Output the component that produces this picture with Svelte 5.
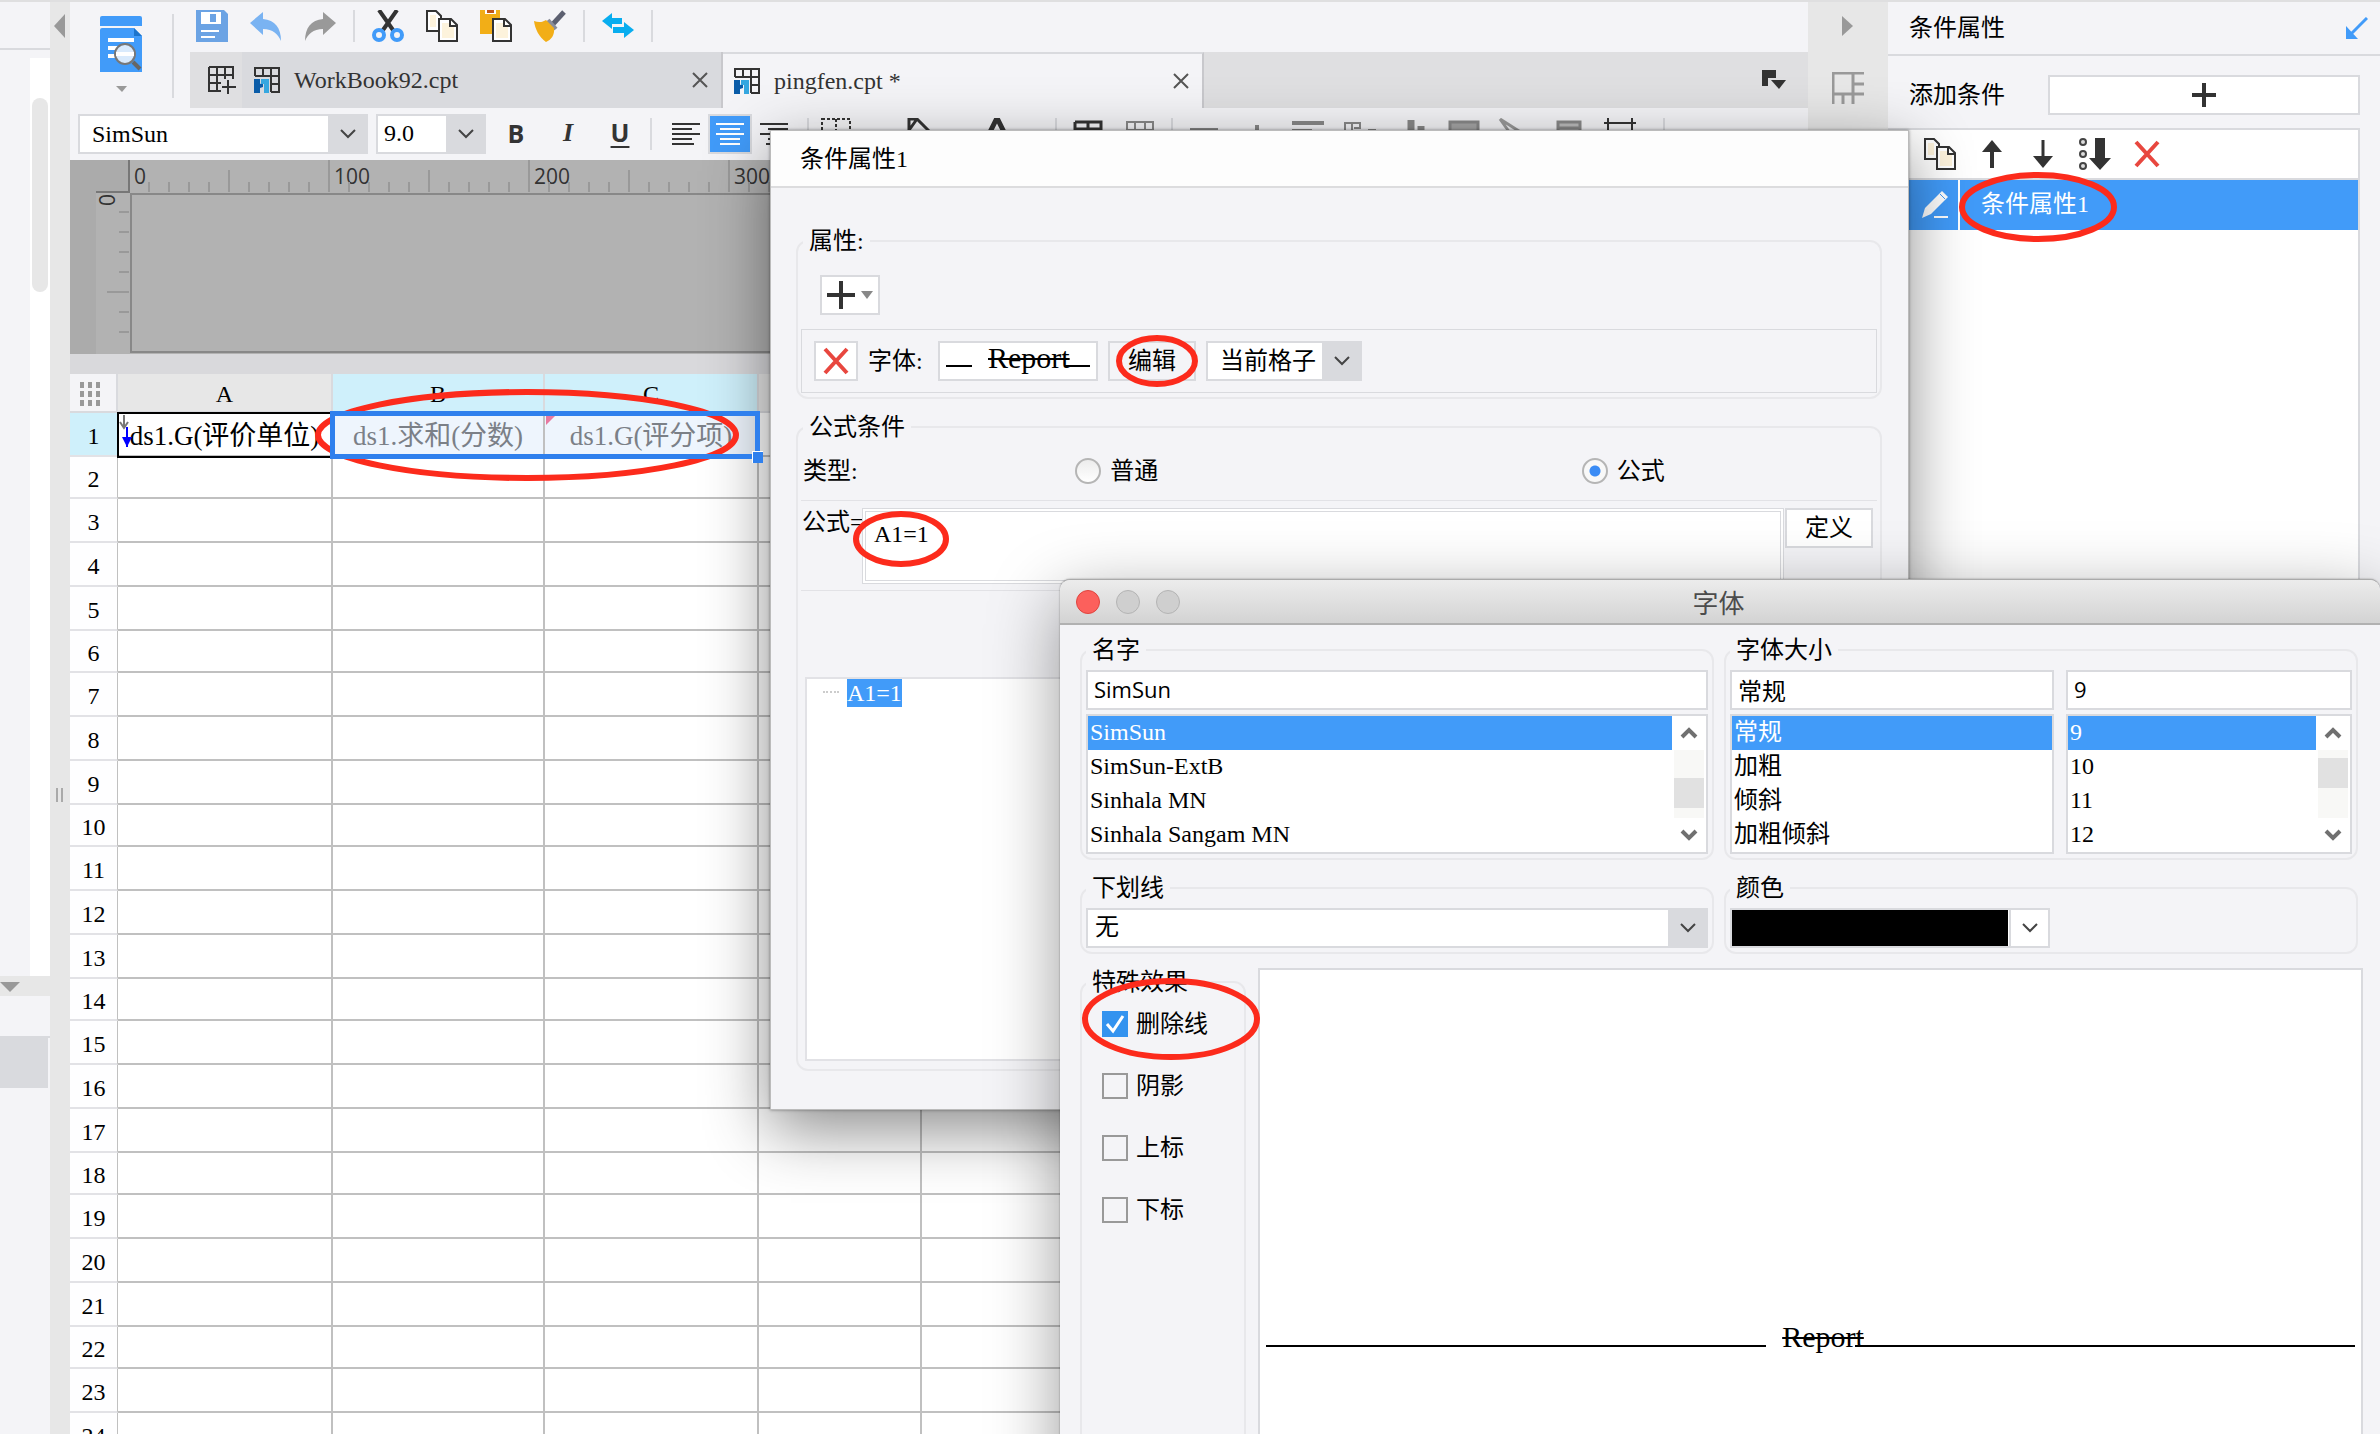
<script>
    let fontName = $state('SimSun');
    let fontSize = $state('9.0');
    let scope = $state('当前格子');
    let conditionType = $state('formula');
    let formula = $state('A1=1');
    let family = $state('SimSun');
    let style = $state('常规');
    let size = $state('9');
    let underline = $state('无');
    let effects = $state([
        { label: '删除线', on: true },
        { label: '阴影', on: false },
        { label: '上标', on: false },
        { label: '下标', on: false }
    ]);

    const families = ['SimSun', 'SimSun-ExtB', 'Sinhala MN', 'Sinhala Sangam MN'];
    const styles = ['常规', '加粗', '倾斜', '加粗倾斜'];
    const sizes = ['9', '10', '11', '12'];
    const rows = Array.from({ length: 24 }, (_, i) => i + 1);
    const hTicks = Array.from({ length: 84 }, (_, i) => i);
    const vTicks = [1, 2, 3, 4, 5, 6, 7];

    function tickTop(i) {
        if (i % 10 === 0) return 0;
        return i % 5 === 0 ? 10 : 22;
    }
</script>

{#snippet copyIcon()}
    <svg width="32" height="32" viewBox="0 0 32 32">
        <path d="M1 1h9l5 5v15H1z" fill="#fff" stroke="#333" stroke-width="2" />
        <path d="M4 5h6v12H4z" fill="#fdf3dc" />
        <path d="M13 9h12l6 6v16H13z" fill="#fff" stroke="#333" stroke-width="2" />
        <path d="M16 13h8v4h4v11H16z" fill="#fdf3dc" />
        <path d="M24 9v7h7" fill="none" stroke="#333" stroke-width="2" />
    </svg>
{/snippet}

{#snippet bookIcon()}
    <svg width="26" height="26" viewBox="0 0 26 26">
        <path d="M1 9V1h24v24h-8M9 1v9M17 1v24M1 9h24M17 17h8" fill="none" stroke="#333" stroke-width="2" />
        <path d="M0 12h6v5l3-1v4l-3 1v5H0z" fill="#0a5ca8" />
        <path d="M7 12h8v14h-5v-9H7z" fill="#35a7e0" />
    </svg>
{/snippet}

{#snippet chevron(up)}
    <svg width="18" height="12" viewBox="0 0 18 12">
        <path d={up ? 'M2 10 9 3l7 7' : 'M2 2l7 7 7-7'} fill="none" stroke="currentColor" stroke-width={up === undefined ? 2 : 4} />
    </svg>
{/snippet}

{#snippet cross()}
    <svg width="26" height="28" viewBox="0 0 26 28">
        <path d="M2 2l22 24M24 2 2 26" fill="none" stroke="#e8473f" stroke-width="4" />
    </svg>
{/snippet}

{#snippet listbox(label, items, selected, pick, thumb)}
    <div class="listbox">
        <ul role="listbox" aria-label={label}>
            {#each items as item}
                <li role="option" aria-selected={item === selected}>
                    <button class="option" class:selected={item === selected} onclick={() => pick(item)}>{item}</button>
                </li>
            {/each}
        </ul>
        {#if thumb !== undefined}
            <div class="scrollbar">
                <button aria-label="Up">{@render chevron(true)}</button>
                <div class="track"><div class="thumb" style="margin-top: {thumb}px"></div></div>
                <button aria-label="Down">{@render chevron(false)}</button>
            </div>
        {/if}
    </div>
{/snippet}

<div class="app">
    <aside class="left">
        <div class="left-head"></div>
        <div class="left-scroll"><div class="left-thumb"></div></div>
        <div class="left-split"><svg width="20" height="10"><path d="M0 0h20L10 10z" fill="#999" /></svg></div>
        <div class="left-tab"></div>
        <div class="left-box"></div>
    </aside>
    <div class="splitter">
        <svg class="fold" width="14" height="28"><path d="M12 2v24L1 14z" fill="#999" /></svg>
        <svg class="grip" width="8" height="14"><path d="M1 0v14M6 0v14" stroke="#aaa" stroke-width="2" /></svg>
    </div>

    <main>
        <div class="top">
            <button class="preview-btn" aria-label="Preview">
                <svg width="42" height="76" viewBox="0 0 42 76">
                    <path d="M0 2q0-2 2-2h38q2 0 2 2v8H0z" fill="#419bf9" />
                    <path d="M0 14q0-2 2-2h32l8 8v36H0z" fill="#419bf9" />
                    <path d="M0 10h42v2H0z" fill="#f4f4f7" />
                    <path d="M34 12l8 8h-8z" fill="#1c74cc" />
                    <path d="M8 24h26M8 32h12M8 40h10" stroke="#fff" stroke-width="4" />
                    <circle cx="25" cy="38" r="10" fill="#d9eafc" stroke="#777" stroke-width="2" />
                    <path d="M16 38h18" stroke="#fff" stroke-width="4" />
                    <path d="M33 46l7 7" stroke="#666" stroke-width="4" />
                    <path d="M16 70h11l-5 6z" fill="#999" />
                </svg>
            </button>
            <div class="vline tall"></div>
            <div class="top-right">
                <div class="tools">
                    <button aria-label="Save">
                        <svg width="32" height="32"><path d="M0 0h28l4 4v28H0z" fill="#6ba3e4" /><path d="M5 2h20v12H5z" fill="#fff" /><path d="M14 4h6v8h-6z" fill="#6ba3e4" /><path d="M5 21h18M5 27h14" stroke="#fff" stroke-width="2" /></svg>
                    </button>
                    <button aria-label="Undo">
                        <svg width="32" height="32"><path d="M0 13 13 2v7c12 1 18 9 18 22-3-7-8-12-18-12v6z" fill="#7ab3f2" /></svg>
                    </button>
                    <button aria-label="Redo">
                        <svg width="32" height="32"><path d="M32 13 19 2v7C7 10 1 18 1 31c3-7 8-12 18-12v6z" fill="#999" /></svg>
                    </button>
                    <div class="vline"></div>
                    <button aria-label="Cut">
                        <svg width="32" height="32"><path d="M7 0l14 20M25 0 11 20" stroke="#333" stroke-width="4" fill="none" /><circle cx="7" cy="25" r="5" fill="none" stroke="#419bf9" stroke-width="4" /><circle cx="25" cy="25" r="5" fill="none" stroke="#419bf9" stroke-width="4" /></svg>
                    </button>
                    <button aria-label="Copy">{@render copyIcon()}</button>
                    <button aria-label="Paste">
                        <svg width="32" height="32"><path d="M0 0h20v24H0z" fill="#f2ae17" /><path d="M5 0h11v4H5z" fill="#fff" /><path d="M7 0h7v3H7z" fill="#c0561a" /><path d="M13 9h12l6 6v16H13z" fill="#fff" stroke="#333" stroke-width="2" /><path d="M16 13h8v4h4v11H16z" fill="#fdf3dc" /><path d="M24 9v7h7" fill="none" stroke="#333" stroke-width="2" /></svg>
                    </button>
                    <button aria-label="Format painter">
                        <svg width="32" height="32"><path d="M30 2 19 14" stroke="#5c6070" stroke-width="5" /><path d="M14 10l8 9" stroke="#8a8d99" stroke-width="4" /><path d="M12 10c-3 2-7 3-12 1 1 8 5 16 12 21 5-2 9-7 8-14z" fill="#f2ae17" /></svg>
                    </button>
                    <div class="vline"></div>
                    <button aria-label="Swap">
                        <svg width="32" height="32"><path d="M0 11 10 3v5h10v6H10v5z" fill="#08adef" /><path d="M32 20 22 12v5H11v6h11v5z" fill="#08adef" /></svg>
                    </button>
                    <div class="vline"></div>
                </div>
                <div class="tabs">
                    <button class="new-tab" aria-label="New">
                        <svg width="28" height="28"><path d="M1 1h24v12M1 1v24h12M9 1v24M17 1v12M1 9h24M1 17h12M20 14v14M14 21h14" fill="none" stroke="#333" stroke-width="2" /></svg>
                    </button>
                    <div class="tab">
                        {@render bookIcon()}<span>WorkBook92.cpt</span>
                        <button aria-label="Close"><svg width="16" height="16"><path d="M1 1l14 14M15 1 1 15" stroke="#555" stroke-width="2" /></svg></button>
                    </div>
                    <div class="tab active">
                        {@render bookIcon()}<span>pingfen.cpt *</span>
                        <button aria-label="Close"><svg width="16" height="16"><path d="M1 1l14 14M15 1 1 15" stroke="#555" stroke-width="2" /></svg></button>
                    </div>
                    <button class="tab-menu" aria-label="Tabs"><svg width="24" height="20"><path d="M0 0h14v8H6v8H0z" fill="#333" /><path d="M9 10h15l-7 9z" fill="#333" /></svg></button>
                </div>
            </div>
        </div>

        <div class="format">
            <div class="combo font-combo">
                <select aria-label="Font" bind:value={fontName}><option>SimSun</option></select>
                <span class="arrow">{@render chevron()}</span>
            </div>
            <div class="combo size-combo">
                <select aria-label="Size" bind:value={fontSize}><option>9.0</option></select>
                <span class="arrow">{@render chevron()}</span>
            </div>
            <button class="bold">B</button>
            <button class="italic">I</button>
            <button class="under">U</button>
            <div class="vline"></div>
            <button class="align" aria-label="Left"><svg width="28" height="22"><path d="M0 1h28M0 6h20M0 11h28M0 16h20M0 21h22" stroke="#333" stroke-width="2" /></svg></button>
            <button class="align on" aria-label="Center"><svg width="28" height="22"><path d="M0 1h28M4 6h20M0 11h28M4 16h20M4 21h20" stroke="#fff" stroke-width="2" /></svg></button>
            <button class="align" aria-label="Right"><svg width="28" height="22"><path d="M0 1h28M8 6h20M0 11h28M8 16h20M6 21h22" stroke="#333" stroke-width="2" /></svg></button>
            <svg class="more" width="880" height="32">
                <g fill="none" stroke="#333" stroke-width="2">
                    <path d="M8 0v32M256 0v32M372 0v32M864 0v32" stroke="#d9dade" />
                    <path d="M22 1h28v30H22zM36 1v30" stroke-dasharray="3 2" />
                    <path d="M109 12V1h8l14 14M117 1l-10 14" stroke-width="3" />
                    <path d="M190 14l7-14 7 14" stroke-width="5" />
                    <path d="M276 13h24v19h-24z" fill="#35b5f2" stroke="none" />
                    <path d="M275 4h26v26M275 4v26M288 4v8M275 11h26" stroke-width="3" />
                    <path d="M327 4h26v26h-26zM335 4v26M345 4v26M327 12h26" stroke="#888" />
                    <path d="M390 12h28M457 7v12M492 5h32M492 13h20" stroke="#888" stroke-width="4" />
                    <path d="M545 14V5h16M552 5v9M560 5v5h-6M568 12h8" stroke="#888" stroke-width="2" />
                    <path d="M611 2v30M621 8v24" stroke="#888" stroke-width="7" />
                    <path d="M650 4h28v26h-28z" fill="#a5a5a5" stroke="#888" stroke-width="3" />
                    <path d="M700 1l22 14M700 1l10 14" stroke="#999" stroke-width="3" />
                    <path d="M758 4h22v26h-22zM758 10h22" fill="#bbb" stroke="#888" stroke-width="3" />
                    <path d="M804 5h32M808 0v32M832 0v32" />
                </g>
            </svg>
        </div>

        <div class="canvas">
            <svg width="100%" height="194">
                <rect width="100%" height="194" fill="#b2b2b2" />
                <rect width="58" height="32" fill="#ababab" />
                <rect width="26" height="194" fill="#ababab" />
                {#each hTicks as i}
                    <line x1={59 + i * 20} x2={59 + i * 20} y1={tickTop(i)} y2="32" />
                    {#if i % 10 === 0}<text x={64 + i * 20} y="24">{i * 10}</text>{/if}
                {/each}
                {#each vTicks as i}
                    <line x1={i === 5 ? 37 : 49} x2="59" y1={32 + i * 20} y2={32 + i * 20} />
                {/each}
                <text x="-46" y="45" transform="rotate(-90)">0</text>
                <path d="M26 32h34M59 0v33" stroke="#777" stroke-width="2" />
                <path d="M2000 34H61v158h1939" fill="none" stroke="#888" stroke-width="2" />
            </svg>
        </div>

        <div class="sheet">
            <table>
                <colgroup><col class="c0" /><col class="ca" /><col class="cb" /><col class="cc" /><col class="cd" /><col class="ce" /></colgroup>
                <thead>
                    <tr>
                        <th class="corner"><svg width="20" height="24"><path d="M2 0v24M10 0v24M18 0v24" stroke="#999" stroke-width="4" stroke-dasharray="6 3" /></svg></th>
                        <th>A</th><th class="hot">B</th><th class="hot">C</th><th></th><th></th>
                    </tr>
                </thead>
                <tbody>
                    {#each rows as n}
                        <tr class:short={n % 4 === 2}>
                            <th class:hot={n === 1}>{n}</th>
                            {#if n === 1}
                                <td class="a1">ds1.G(评价单位)<svg class="mark" width="16" height="36"><path d="M5 0v12M1 7l4 6 4-6" fill="none" stroke="#777" stroke-width="2" /><path d="M8 12v20" stroke="#00f" stroke-width="2" /><path d="M3 22h10L8 32z" fill="#00f" /></svg></td>
                                <td class="picked first">ds1.求和(分数)<span class="selection"></span><span class="handle"></span></td>
                                <td class="picked">ds1.G(评分项)<svg class="mark" width="12" height="12"><path d="M0 0h10L0 10z" fill="#e879a0" /></svg></td>
                            {:else}
                                <td></td><td></td><td></td>
                            {/if}
                            <td></td><td></td>
                        </tr>
                    {/each}
                </tbody>
            </table>
        </div>
    </main>

    <div class="rail">
        <svg width="12" height="20"><path d="M0 0v20l11-10z" fill="#999" /></svg>
        <svg width="32" height="32"><path d="M1 32V1h31M1 22h31M21 1v31M22 12h10M11 22v10M1 30V22" fill="none" stroke="#999" stroke-width="3" /></svg>
    </div>

    <aside class="right">
        <header>
            <h2>条件属性</h2>
            <svg width="22" height="22"><path d="M21 1 5 17" stroke="#419bf9" stroke-width="3" /><path d="M0 9v13h12z" fill="#419bf9" /></svg>
        </header>
        <div class="add-row">
            <span>添加条件</span>
            <button class="box" aria-label="Add"><svg width="24" height="24"><path d="M12 0v24M0 12h24" stroke="#333" stroke-width="4" /></svg></button>
        </div>
        <div class="cond">
            <div class="cond-tools">
                <button aria-label="Copy">{@render copyIcon()}</button>
                <button aria-label="Up"><svg width="20" height="28"><path d="M10 4v24" stroke="#333" stroke-width="4" /><path d="M0 12 10 0l10 12z" fill="#333" /></svg></button>
                <button aria-label="Down"><svg width="20" height="28"><path d="M10 0v24" stroke="#333" stroke-width="3" /><path d="M0 16l10 12 10-12z" fill="#333" /></svg></button>
                <button aria-label="Bottom"><svg width="32" height="32"><g fill="#ddd" stroke="#444" stroke-width="2"><circle cx="4" cy="4" r="3" /><circle cx="4" cy="16" r="3" /><circle cx="4" cy="28" r="3" /></g><path d="M16 0h10v20h6L21 32 10 20h6z" fill="#333" /></svg></button>
                <button aria-label="Delete">{@render cross()}</button>
            </div>
            <div class="cond-item">
                <span class="pencil"><svg width="28" height="28"><path d="M0 27l3-10L20 0l6 6L9 23z" fill="#fff" /><path d="M18 3l5 5" stroke="#419bf9" stroke-width="1" /><path d="M12 26h14" stroke="#fff" stroke-width="2" /></svg></span>
                <span class="cond-name">条件属性1</span>
            </div>
        </div>
    </aside>

    <section class="dialog">
        <h3>条件属性1</h3>
        <div class="dialog-body">
            <fieldset class="props">
                <legend>属性:</legend>
                <button class="box plus" aria-label="Add"><svg width="28" height="28"><path d="M14 0v28M0 14h28" stroke="#333" stroke-width="4" /></svg><svg width="12" height="8"><path d="M0 0h12L6 8z" fill="#888" /></svg></button>
                <div class="prop-row">
                    <button class="box del" aria-label="Delete">{@render cross()}</button>
                    <span class="prop-label">字体:</span>
                    <div class="box sample"><i></i><s>Report</s><b></b></div>
                    <button class="box edit">编辑</button>
                    <div class="combo scope">
                        <select aria-label="Scope" bind:value={scope}><option>当前格子</option></select>
                        <span class="arrow">{@render chevron()}</span>
                    </div>
                </div>
            </fieldset>

            <fieldset class="rules">
                <legend>公式条件</legend>
                <div class="type-row">
                    <span>类型:</span>
                    <label><input type="radio" name="type" value="plain" bind:group={conditionType} />普通</label>
                    <label><input type="radio" name="type" value="formula" bind:group={conditionType} />公式</label>
                </div>
                <div class="formula-row">
                    <label for="formula">公式=</label>
                    <textarea id="formula" bind:value={formula}></textarea>
                    <button class="box define">定义</button>
                </div>
                <div class="tree">
                    <span class="twig"></span><span class="node">A1=1</span>
                </div>
            </fieldset>
        </div>
    </section>

    <section class="font-dialog">
        <div class="titlebar">
            <span class="light close"></span><span class="light"></span><span class="light"></span>
            <h3>字体</h3>
        </div>
        <div class="font-body">
            <fieldset>
                <legend>名字</legend>
                <input class="latin" aria-label="名字" bind:value={family} />
                {@render listbox('名字', families, family, (v) => (family = v), 28)}
            </fieldset>
            <fieldset>
                <legend>字体大小</legend>
                <div class="pair">
                    <div>
                        <input aria-label="字形" bind:value={style} />
                        {@render listbox('字形', styles, style, (v) => (style = v))}
                    </div>
                    <div>
                        <input class="latin" aria-label="字体大小" bind:value={size} />
                        {@render listbox('字体大小', sizes, size, (v) => (size = v), 8)}
                    </div>
                </div>
            </fieldset>
            <fieldset>
                <legend>下划线</legend>
                <div class="combo sans">
                    <select aria-label="下划线" bind:value={underline}><option>无</option></select>
                    <span class="arrow">{@render chevron()}</span>
                </div>
            </fieldset>
            <fieldset>
                <legend>颜色</legend>
                <button class="color" aria-label="颜色"><span class="swatch"></span><span class="drop">{@render chevron()}</span></button>
            </fieldset>
            <div class="bottom">
                <fieldset class="effects">
                    <legend>特殊效果</legend>
                    {#each effects as effect}
                        <label>
                            <input type="checkbox" bind:checked={effect.on} />
                            {#if effect.on}<svg width="20" height="20"><path d="M2 10l6 7L18 2" fill="none" stroke="#fff" stroke-width="3" /></svg>{/if}
                            {effect.label}
                        </label>
                    {/each}
                </fieldset>
                <div class="preview"><i></i><s>Report</s><b></b></div>
            </div>
        </div>
    </section>

    <svg class="marks">
        <ellipse cx="2038" cy="207" rx="76" ry="32" />
        <ellipse cx="527" cy="435" rx="209" ry="43" />
        <ellipse cx="1157" cy="361" rx="38" ry="23" />
        <ellipse cx="901" cy="539" rx="45" ry="25" />
        <ellipse cx="1171" cy="1019" rx="86" ry="38" />
    </svg>
</div>

<style>
    :global(body) { margin: 0; overflow: hidden; }
    .app { --line: #d9dade; --bg: #f4f4f7; --blue: #419bf9; position: relative; display: flex; height: 100vh; overflow: hidden; box-sizing: border-box; border-top: 2px solid #dfdfe0; background: var(--bg); color: #000; font: 24px/28px 'Liberation Serif', 'Noto Sans CJK SC', serif; }
    .app :global(*) { box-sizing: border-box; }
    svg { display: block; flex: none; }
    button { display: flex; align-items: center; justify-content: center; padding: 0; border: 0; background: none; color: inherit; font: inherit; white-space: nowrap; cursor: pointer; }
    h2, h3 { margin: 0; font: inherit; }
    .box { height: 40px; border: 2px solid var(--line); background: #fff; }
    .vline { width: 2px; height: 32px; background: var(--line); }

    /* left strip */
    .left { display: flex; flex-direction: column; width: 50px; }
    .left-head { height: 48px; border-bottom: 2px solid var(--line); }
    .left-scroll { height: 918px; margin: 8px 0 0 30px; padding: 40px 2px 0; background: #fff; }
    .left-thumb { height: 194px; border-radius: 8px; background: #e7e7e7; }
    .left-split { height: 20px; padding-top: 6px; background: #e7e7e7; }
    .left-tab { height: 42px; border-bottom: 2px solid var(--line); }
    .left-box { width: 48px; height: 50px; background: var(--line); }
    .splitter { display: flex; flex-direction: column; align-items: center; width: 20px; padding-top: 10px; background: #e7e7e7; }
    .grip { margin-top: 748px; }

    main { display: flex; flex: 1; flex-direction: column; min-width: 0; }
    .top { display: flex; height: 106px; }
    .preview-btn { align-items: flex-start; width: 102px; padding-top: 14px; }
    .tall { height: 84px; margin-top: 12px; }
    .top-right { flex: 1; margin-left: 16px; }
    .tools { display: flex; gap: 17px; height: 50px; padding: 8px 0 0 6px; }
    .tools button { height: 32px; }
    .tools button + button { margin-left: 5px; }
    .tabs { display: flex; height: 56px; background: #dfdfe1; }
    .new-tab { width: 52px; padding-left: 12px; }
    .tab { display: flex; align-items: center; width: 481px; padding: 0 13px 0 12px; border-right: 2px solid #c8c8cc; background: var(--line); color: #333; }
    .tab span { flex: 1; margin-left: 14px; }
    .active { padding-left: 11px; border-top: 2px solid var(--line); background: var(--bg); }
    .tab-menu { margin: 0 22px 0 auto; }

    .format { display: flex; height: 52px; padding: 6px 0 0 8px; overflow: hidden; }
    .format > button { height: 40px; }
    .format .vline { margin: 4px 0 0; }
    .combo { position: relative; height: 40px; }
    .combo select { width: 100%; height: 40px; padding: 0 0 0 12px; border: 2px solid var(--line); border-radius: 0; background: #fff; color: #000; font: inherit; appearance: none; }
    .arrow { position: absolute; top: 0; right: 0; display: flex; align-items: center; justify-content: center; width: 40px; height: 40px; background: var(--line); color: #444; pointer-events: none; }
    .font-combo { width: 290px; margin-right: 8px; }
    .size-combo { width: 110px; }
    .size-combo select { padding: 0 0 2px 6px; }
    .bold, .italic, .under { width: 52px; color: #333; font: 700 25px/28px 'Open Sans', sans-serif; }
    .bold { margin-left: 4px; padding-bottom: 2px; }
    .italic { padding-bottom: 2px; font: italic 700 26px/28px 'Liberation Serif', serif; }
    .under { margin-right: 4px; padding-bottom: 4px; text-decoration: underline; text-underline-offset: 4px; }
    .align { width: 44px; }
    .vline + .align { margin-left: 12px; }
    .on { border: 2px solid var(--line); background: var(--blue); }
    .more { margin: 4px 0 0 4px; }

    .canvas { height: 194px; }
    .canvas line { stroke: #999; stroke-width: 2; }
    .canvas text { fill: #333; font: 21px 'Open Sans', sans-serif; }

    .sheet { flex: 1; padding-top: 20px; overflow: hidden; background: #d9d9dc; }
    table { width: 1738px; border-spacing: 0; table-layout: fixed; background: #fff; }
    .c0 { width: 48px; }
    .ca { width: 215px; }
    .cb { width: 212px; }
    .cc { width: 214px; }
    .cd { width: 163px; }
    th, td { padding: 0; border-right: 2px solid #c0c0c0; border-bottom: 2px solid #c0c0c0; font-weight: 400; text-align: center; white-space: nowrap; }
    thead th { height: 39px; padding-top: 3px; border-color: var(--line); background: #e7e7e7; }
    .corner { background: var(--bg); }
    .corner svg { margin: 0 8px 0 auto; margin-left: 10px; }
    tbody tr { height: 44px; }
    tbody .short { height: 42px; }
    tbody th { padding-top: 3px; border-right-width: 1px; border-bottom-color: #e2e2e6; background: #fefeff; }
    tbody th.hot, thead th.hot { background: #cff0fb; }
    td { position: relative; padding-top: 4px; font-size: 27px; line-height: 30px; }
    .a1 { outline: 2px solid #000; outline-offset: -1px; }
    .picked { background: #eef5fd; color: #7b8087; }
    .first { z-index: 1; }
    .mark { position: absolute; top: 2px; left: 1px; }
    .selection { position: absolute; top: -2px; left: -3px; width: 430px; height: 48px; border: 5px solid #2f80ed; }
    .handle { position: absolute; top: 38px; left: 419px; width: 11px; height: 12px; border: solid #fff; border-width: 1px 0 0 1px; background: #2f80ed; }

    .rail { display: flex; flex-direction: column; align-items: center; gap: 36px; width: 80px; padding-top: 14px; background: #e7e7e7; }
    .right { display: flex; flex-direction: column; width: 492px; }
    .right header { display: flex; align-items: center; justify-content: space-between; height: 54px; padding: 0 12px 0 21px; border-bottom: 2px solid var(--line); }
    .add-row { display: flex; align-items: center; gap: 43px; height: 72px; padding: 6px 20px 0 21px; }
    .add-row .box { flex: 1; }
    .cond { flex: 1; margin-right: 20px; border: solid var(--line); border-width: 2px 2px 0 0; background: #fff; }
    .cond-tools { display: flex; align-items: center; gap: 26px; height: 50px; padding-left: 36px; border-bottom: 2px solid var(--line); }
    .cond-tools button:nth-child(3) { margin-left: 5px; }
    .cond-tools button:last-child { margin-left: -3px; }
    .cond-item { display: flex; height: 50px; background: var(--blue); color: #fff; }
    .pencil { display: flex; align-items: center; width: 72px; padding-left: 34px; border-right: 2px solid #fff; }
    .cond-name { padding: 10px 0 0 21px; }

    fieldset { min-width: 0; margin: 0; padding: 6px 4px 4px; border: 2px solid #e8e8eb; border-radius: 12px; }
    legend { height: 28px; padding: 0 6px; }

    .dialog { position: absolute; top: 128px; left: 770px; width: 1139px; height: 980px; border: 1px solid #bbb; background: var(--bg); box-shadow: 0 20px 60px rgba(0, 0, 0, 0.45), 0 0 3px rgba(0, 0, 0, 0.4); }
    .dialog h3 { height: 57px; padding: 14px 0 0 29px; border-bottom: 2px solid #dcdcde; background: #fdfdfd; }
    .dialog-body { display: grid; gap: 14px; padding: 39px 26px 0 25px; }
    .dialog fieldset { padding: 0 3px 4px; }
    .dialog legend { margin-left: 2px; }
    .plus { gap: 6px; width: 60px; margin: 20px 0 14px 19px; }
    .prop-row { display: flex; align-items: center; height: 64px; padding-left: 12px; border: 1px solid var(--line); }
    .del { width: 44px; }
    .prop-label { width: 80px; padding-left: 10px; white-space: nowrap; }
    .sample { display: flex; width: 160px; margin-right: 10px; padding-left: 6px; font-size: 30px; line-height: 30px; }
    .sample i, .sample b { width: 26px; height: 2px; margin-top: 22px; background: #000; }
    .sample i { margin-right: 16px; }
    .sample b { margin-left: -6px; }
    s { text-decoration-thickness: 2px; }
    .edit { width: 88px; margin-right: 10px; background: var(--bg); }
    .scope { width: 156px; }
    .type-row { display: grid; grid-template-columns: 274fr 506fr 295fr; align-items: center; height: 60px; border-bottom: 1px solid #e2e2e6; }
    .type-row span { padding-left: 2px; }
    .type-row label { display: flex; align-items: center; gap: 9px; }
    input[type='radio'] { width: 26px; height: 26px; margin: 0; border: 2px solid #b5b5b5; border-radius: 50%; background: linear-gradient(#ececec, #fff); appearance: none; }
    input[type='radio']:checked { background: radial-gradient(circle, #3b8cf5 5px, #f8f8f8 6px); }
    .formula-row { display: flex; align-items: flex-start; padding: 7px 4px 6px 1px; border-bottom: 1px solid #e2e2e6; }
    .formula-row label { width: 60px; white-space: nowrap; }
    textarea { flex: 1; height: 76px; padding: 8px; border: 4px double var(--line); background: #fff; font: inherit; resize: none; }
    .define { width: 88px; margin-left: 1px; }
    .tree { display: flex; align-items: flex-start; width: 900px; height: 384px; margin: 86px 0 4px 4px; padding-left: 16px; border: 2px solid #e2e2e6; background: #fff; }
    .twig { width: 16px; margin: 12px 8px 0 0; border-top: 2px dotted #ccc; }
    .node { background: var(--blue); color: #fff; }

    .font-dialog { position: absolute; top: 577px; right: 0; left: 1060px; border: 1px solid #aaa; border-width: 1px 0 0; border-radius: 10px 10px 0 0; background: var(--bg); box-shadow: 0 20px 70px rgba(0, 0, 0, 0.4), 0 0 2px rgba(0, 0, 0, 0.4); }
    .titlebar { position: relative; display: flex; align-items: center; gap: 16px; height: 45px; padding-left: 16px; border-bottom: 2px solid #b1b1b1; border-radius: 10px 10px 0 0; background: linear-gradient(#ececec, #d3d3d3); }
    .light { width: 24px; height: 24px; border: 1px solid #b4b4b4; border-radius: 50%; background: #cfcfcf; }
    .close { border-color: #e0443e; background: #fc605c; }
    .titlebar h3 { position: absolute; inset: 7px 3px 0 0; color: #4c4c4c; font: 26px/30px 'Noto Sans CJK SC', sans-serif; text-align: center; pointer-events: none; }
    .font-body { display: grid; grid-template-columns: 1fr 1fr; gap: 14px 10px; padding: 11px 22px 0 20px; }
    .font-body input:not([type]) { display: block; width: 100%; height: 40px; margin-bottom: 4px; padding: 0 6px 2px; border: 2px solid var(--line); background: #fff; color: #000; font: 24px/28px 'Noto Sans CJK SC', sans-serif; }
    .font-body input.latin { font: 22px/28px 'Open Sans', sans-serif; }
    .pair { display: grid; grid-template-columns: 324fr 286fr; gap: 12px; }
    .listbox { display: flex; height: 140px; border: 2px solid var(--line); background: #fff; }
    ul { flex: 1; margin: 0; padding: 0; list-style: none; }
    .option { justify-content: flex-start; width: 100%; height: 34px; padding: 0 0 2px 2px; }
    .selected { background: var(--blue); color: #fff; }
    .scrollbar { display: flex; flex-direction: column; width: 34px; color: #707070; }
    .scrollbar button { height: 34px; }
    .track { flex: 1; margin: 0 2px; background: #f8f8f6; }
    .thumb { height: 30px; background: #e1e1e1; }
    .sans select { padding: 0 0 6px 7px; font: 24px/28px 'Noto Sans CJK SC', sans-serif; }
    .color { width: 320px; height: 40px; border: 2px solid var(--line); }
    .swatch { flex: 1; height: 36px; border-right: 1px solid #fff; background: #000; }
    .drop { display: flex; align-items: center; justify-content: center; width: 39px; height: 36px; border-left: 2px solid var(--line); background: #fff; color: #444; }
    .bottom { display: flex; grid-column: 1 / 3; gap: 12px; height: 738px; }
    .effects { width: 166px; padding: 11px 0 0 20px; }
    .effects legend { margin-left: -16px; }
    .effects label { position: relative; display: flex; align-items: center; gap: 8px; height: 34px; margin-bottom: 28px; white-space: nowrap; }
    input[type='checkbox'] { width: 26px; height: 26px; margin: 0; border: 2px solid #999; background: transparent; appearance: none; }
    input[type='checkbox']:checked { border-color: #3393ef; background: #3393ef; }
    .effects svg { position: absolute; top: 7px; left: 3px; pointer-events: none; }
    .preview { display: flex; flex: 1; align-items: center; margin-right: -5px; padding: 0 6px; border: 2px solid var(--line); background: #fff; font-size: 30px; line-height: 32px; }
    .preview i, .preview b { flex: 1; height: 2px; margin-top: 18px; background: #000; }
    .preview i { margin-right: 16px; }
    .preview b { margin-left: -9px; }

    .marks { position: absolute; inset: -2px 0 0; width: 100%; height: 100%; pointer-events: none; }
    .marks ellipse { fill: none; stroke: #fc2b1c; stroke-width: 6; }
</style>
